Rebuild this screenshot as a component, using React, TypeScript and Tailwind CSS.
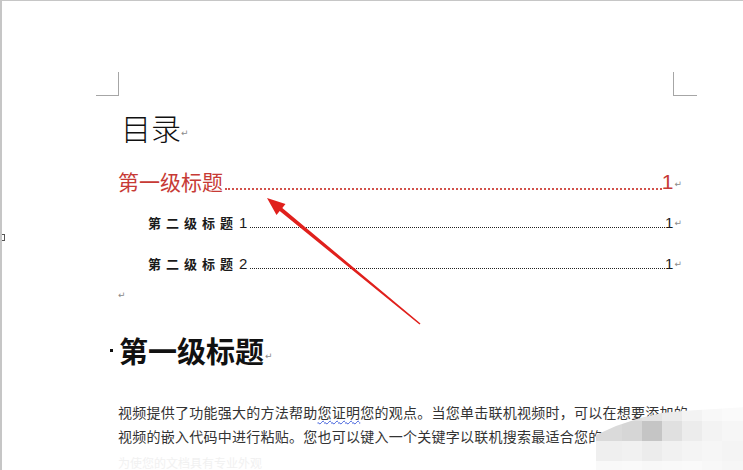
import React from "react";

const cjk = "[font-family:'Noto_Sans_CJK_SC','Noto_Sans',sans-serif]";

function Mark({ className = "" }: { className?: string }) {
  return (
    <span className={`[font-family:'DejaVu_Sans',sans-serif] text-[9px] leading-none text-[#8a8a8a] ${className}`}>
      ↵
    </span>
  );
}

const mosaic = [
  ["bg-[#e2e2e2]", "bg-[#e0e0e0]", "bg-[#e4e4e4]", "bg-[#ebebeb]", "bg-[#f3f3f3]", "bg-[#f8f8f8]", "bg-[#fafafa]"],
  ["bg-[#dadada]", "bg-[#d6d6d6]", "bg-[#c5c5c5]", "bg-[#e0e0e0]", "bg-[#ececec]", "bg-[#f3f3f3]", "bg-[#f6f6f6]"],
  ["bg-[#efefef]", "bg-[#f1f1f1]", "bg-[#ececec]", "bg-[#f1f1f1]", "bg-[#f4f4f4]", "bg-[#f6f6f6]", "bg-[#f4f4f4]"],
  ["bg-[#f9f9f9]", "bg-[#fafafa]", "bg-[#f8f8f8]", "bg-[#f9f9f9]", "bg-[#fafafa]", "bg-[#f8f8f8]", "bg-[#f6f6f6]"],
];

export default function App() {
  return (
    <div className={`relative h-[470px] w-[743px] overflow-hidden border-l-2 border-t border-[#c6c6c6] bg-white ${cjk}`}>
      {/* corner crop marks */}
      <div className="mt-[71px] flex justify-between pl-[94px] pr-[46px]">
        <div className="h-[24px] w-[23px] border-b border-r border-[#a6a6a6]" />
        <div className="h-[24px] w-[24px] border-b border-l border-[#a6a6a6]" />
      </div>

      <div className="ml-[116px] w-[564px] flex flex-col">
        {/* title */}
        <div className="mt-[14px] flex h-[33px] items-center">
          <span className="ml-[3px] text-[30px] font-light leading-none text-[#111]">目录</span>
          <Mark className="mt-[14px]" />
        </div>

        {/* TOC level 1 */}
        <div className="mt-[25px] flex h-[26px] items-center text-[#c73a35]">
          <span className="text-[21px] leading-none">第一级标题</span>
          <div className="mb-[4px] ml-[2px] flex-1 self-end border-b-2 border-dotted border-[#d2524c]" />
          <span className="[font-family:'Liberation_Sans',sans-serif] text-[21px] leading-none">1</span>
          <Mark className="ml-[1px] mt-[6px]" />
        </div>

        {/* TOC level 2 */}
        {["1", "2"].map((n, i) => (
          <div key={n} className={`flex h-[22px] items-center text-[#1a1a1a] ${i === 0 ? "mt-[17px]" : "mt-[19px]"}`}>
            <span className="ml-[30px] text-[13px] font-bold leading-none tracking-[5px]">第二级标题</span>
            <span className="ml-[1px] [font-family:'Liberation_Sans',sans-serif] text-[15px] leading-none">{n}</span>
            <div className="mb-[5px] ml-[3px] flex-1 self-end border-b border-dotted border-[#222]" />
            <span className="[font-family:'Liberation_Sans',sans-serif] text-[15px] leading-none">1</span>
            <Mark className="ml-[1px] mt-[3px]" />
          </div>
        ))}

        <div className="mt-[11px] flex h-[20px] items-center">
          <Mark />
        </div>

        {/* heading */}
        <div className="mt-[30px] flex h-[30px] items-center">
          <span className="-ml-[8px] mr-[6px] h-[3px] w-[3px] bg-[#111]" />
          <span className="text-[29px] font-bold leading-none text-[#111]">第一级标题</span>
          <Mark className="ml-[1px] mt-[12px]" />
        </div>

        {/* body */}
        <div className="mt-[36px] text-[14px] leading-[23.5px] tracking-[0.25px] text-[#333] whitespace-nowrap">
          <div>
            视频提供了功能强大的方法帮助
            <span className="underline decoration-wavy decoration-[#3b5bdb] decoration-1 underline-offset-2">您证明</span>
            您的观点。当您单击联机视频时，可以在想要添加的
          </div>
          <div>视频的嵌入代码中进行粘贴。您也可以键入一个关键字以联机搜索最适合您的文档的视频。</div>
        </div>
        <div className="mt-[8px] text-[12px] leading-[14px] text-[#f1f1f1] whitespace-nowrap">为使您的文档具有专业外观</div>
      </div>

      {/* left edge marker */}
      <div className="absolute left-0 top-[233px] h-[7px] w-[3px] border border-l-0 border-[#555]" />

      {/* red arrow annotation */}
      <svg className="absolute left-0 top-0" width="743" height="470" viewBox="0 0 743 470">
        <polygon
          points="265,197 283.5,203 280.3,207 418.5,322.4 417.5,323.6 277.7,210 274.5,214"
          fill="#e0201c"
        />
      </svg>

      {/* pixelated blur */}
      <div className="absolute left-[594px] top-[400px] grid h-[70px] w-[149px] grid-cols-[26px_20px_20px_20px_20px_20px_23px] grid-rows-[20px_20px_20px_10px] [clip-path:polygon(0_34px,20px_25px,44px_17px,66px_12px,86px_10px,100%_6px,100%_100%,0_100%)]">
        {mosaic.flat().map((c, i) => (
          <div key={i} className={c} />
        ))}
      </div>
    </div>
  );
}
